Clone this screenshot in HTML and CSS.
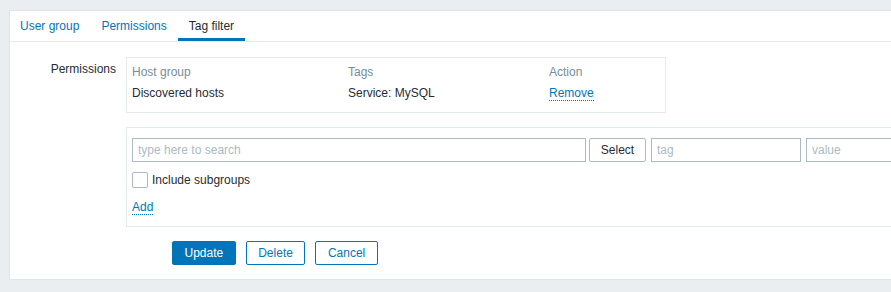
FILE: index.html
```html
<!DOCTYPE html>
<html lang="en">
<head>
    <meta charset="UTF-8">
    <title>User group - Tag filter</title>
    <link rel="stylesheet" href="styles.css">
</head>
<body>
    <div class="container">
        <!-- Tabs -->
        <ul class="tabs">
            <li class="tab"><a href="#">User group</a></li>
            <li class="tab"><a href="#">Permissions</a></li>
            <li class="tab active"><a href="#">Tag filter</a></li>
        </ul>

        <!-- Form -->
        <div class="form">
            <div class="form-label">Permissions</div>
            <div class="form-field">
                <div class="box list-box">
                    <table class="list">
                        <tr class="list-head">
                            <td class="col-group">Host group</td>
                            <td class="col-tags">Tags</td>
                            <td>Action</td>
                        </tr>
                        <tr class="list-row">
                            <td>Discovered hosts</td>
                            <td>Service: MySQL</td>
                            <td><a class="link" href="#">Remove</a></td>
                        </tr>
                    </table>
                </div>
            </div>

            <div class="form-label"></div>
            <div class="form-field">
                <div class="box add-box">
                    <div class="input-row">
                        <input class="input search" type="text" placeholder="type here to search">
                        <button class="btn-alt select">Select</button>
                        <input class="input tag" type="text" placeholder="tag">
                        <input class="input tag" type="text" placeholder="value">
                    </div>
                    <label class="check-row">
                        <span class="checkbox"></span>
                        <span>Include subgroups</span>
                    </label>
                    <div class="add-row"><a class="link" href="#">Add</a></div>
                </div>
            </div>

            <div class="form-label"></div>
            <div class="form-field buttons">
                <button class="btn primary">Update</button>
                <button class="btn">Delete</button>
                <button class="btn">Cancel</button>
            </div>
        </div>
    </div>
</body>
</html>
```

FILE: styles.css
```css
body {
    margin: 0;
    padding: 10px 0 0 9px;
    background: #ebeef0;
    font-family: Arial, "Liberation Sans", sans-serif;
    font-size: 12px;
    color: #1f2c33;
    overflow: hidden;
}
.container {
    width: 1000px;
    background: #fff;
    border: 1px solid #dfe4e7;
    border-right: none;
    padding-bottom: 14px;
}

/* Tabs */
.tabs {
    display: flex;
    list-style: none;
    margin: 0;
    padding: 0 0 0 0;
    height: 30px;
    border-bottom: 1px solid #e6eaec;
}
.tab:first-child {
    margin-left: -1px;
}
.tab a {
    display: block;
    padding: 0 11px;
    line-height: 30px;
    height: 30px;
    box-sizing: border-box;
    color: #0275b8;
    text-decoration: none;
}
.tab.active a {
    color: #1f2c33;
    box-shadow: inset 0 -3px 0 #0275b8;
}

/* Form grid */
.form {
    display: grid;
    grid-template-columns: 106px 1fr;
    column-gap: 10px;
    row-gap: 14px;
    padding-top: 15px;
}
.form-label {
    text-align: right;
    line-height: 14px;
    padding-top: 5px;
}
.box {
    border: 1px solid #e6eaec;
}
.list-box {
    width: 528px;
    padding: 4px 5px 8px;
}
.list {
    width: 100%;
    border-collapse: collapse;
}
.list td {
    padding: 3px 0;
    line-height: 14px;
}
.list-head td {
    color: #768d99;
}
.list-row td {
    padding: 4px 0;
}
.col-group { width: 216px; }
.col-tags { width: 201px; }

.link {
    color: #0275b8;
    text-decoration: none;
    border-bottom: 1px dotted #0275b8;
}

/* Add box */
.add-box {
    padding: 10px 5px 12px;
}
.input-row {
    display: flex;
    height: 24px;
}
.input {
    box-sizing: border-box;
    height: 24px;
    border: 1px solid #acbbc2;
    padding: 0 5px;
    font: inherit;
    color: #1f2c33;
    background: #fff;
    outline: none;
}
.input::placeholder {
    color: #acbbc2;
}
.search { width: 454px; flex: none; }
.tag { width: 150px; flex: none; margin-left: 5px; }
.btn-alt {
    box-sizing: border-box;
    height: 24px;
    width: 57px;
    flex: none;
    margin-left: 3px;
    border: 1px solid #acbbc2;
    border-radius: 2px;
    background: #fff;
    font: inherit;
    color: #1f2c33;
}
.check-row {
    display: flex;
    align-items: center;
    gap: 4px;
    margin-top: 10px;
    height: 16px;
}
.checkbox {
    box-sizing: border-box;
    width: 16px;
    height: 16px;
    border: 1px solid #acbbc2;
    border-radius: 2px;
    background: #fff;
}
.add-row {
    margin-top: 12px;
    line-height: 14px;
}

/* Buttons */
.buttons {
    display: flex;
    gap: 10px;
    padding-left: 46px;
}
.btn {
    box-sizing: border-box;
    height: 24px;
    padding: 0 11.5px;
    border: 1px solid #0275b8;
    border-radius: 2px;
    background: #fff;
    color: #0275b8;
    font: inherit;
}
.btn.primary {
    background: #0275b8;
    color: #fff;
}
```
